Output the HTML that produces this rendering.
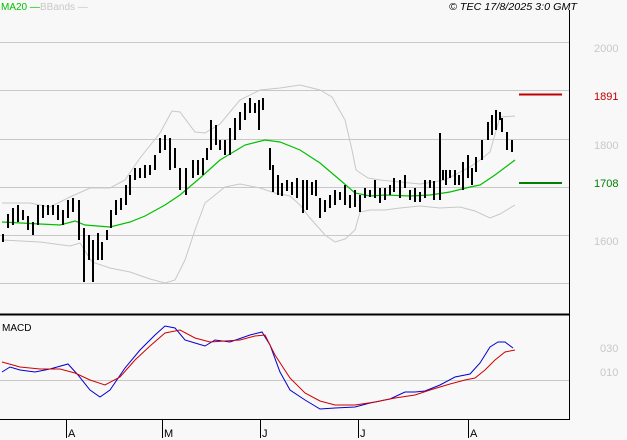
<!DOCTYPE html>
<html><head><style>
html,body{margin:0;padding:0;background:#f8f8f8;}
svg{display:block;font-family:"Liberation Sans",sans-serif;}
</style></head><body>
<svg width="627" height="440" viewBox="0 0 627 440" xmlns="http://www.w3.org/2000/svg">
<rect width="627" height="440" fill="#f8f8f8"/>
<g stroke="#c8c8c8" stroke-width="1">
<line x1="0" y1="42.5" x2="569" y2="42.5"/>
<line x1="0" y1="90.5" x2="569" y2="90.5"/>
<line x1="0" y1="139.5" x2="569" y2="139.5"/>
<line x1="0" y1="187.5" x2="569" y2="187.5"/>
<line x1="0" y1="235.5" x2="569" y2="235.5"/>
<line x1="0" y1="283.5" x2="569" y2="283.5"/>
<line x1="0" y1="380.5" x2="569" y2="380.5"/>
</g>
<line x1="569.5" y1="10" x2="569.5" y2="420" stroke="#000"/>
<line x1="0" y1="314.5" x2="569" y2="314.5" stroke="#000" stroke-width="2"/>
<line x1="0" y1="419.5" x2="570" y2="419.5" stroke="#000"/>
<g stroke="#000"><line x1="66.5" y1="420" x2="66.5" y2="438"/><line x1="162.5" y1="420" x2="162.5" y2="438"/><line x1="260.5" y1="420" x2="260.5" y2="438"/><line x1="358.5" y1="420" x2="358.5" y2="438"/><line x1="468.5" y1="420" x2="468.5" y2="438"/></g>
<g font-size="11" fill="#000"><text x="68" y="437">A</text><text x="164" y="437">M</text><text x="262" y="437">J</text><text x="360" y="437">J</text><text x="470" y="437">A</text></g>
<text x="1" y="10" font-size="10" fill="#00c000">MA20 —</text>
<text x="40" y="10" font-size="10" fill="#c8c8c8">BBands —</text>
<text x="449" y="10" font-size="10" font-style="italic" fill="#000" textLength="128" lengthAdjust="spacingAndGlyphs">© TEC 17/8/2025 3:0 GMT</text>
<g font-size="11" fill="#c8c8c8"><text x="594" y="52">2000</text><text x="594" y="149">1800</text><text x="594" y="245">1600</text><text x="600" y="352">030</text><text x="600" y="376">010</text></g>
<line x1="519" y1="94.5" x2="562" y2="94.5" stroke="#c00000" stroke-width="2"/>
<text x="594" y="100" font-size="11" fill="#c00000">1891</text>
<line x1="519" y1="183" x2="562" y2="183" stroke="#008000" stroke-width="2"/>
<text x="594" y="187" font-size="11" fill="#008000">1708</text>
<g fill="none" stroke="#c8c8c8" stroke-width="1">
<polyline points="2,203 30,203 50,207 70,197 90,188 110,188 125,180 140,158 160,133 172,111 180,112 195,132 205,133 220,124 240,100 260,90 280,88 300,85 320,90 332,97 345,120 352,150 356,170 368,178 380,180 400,182 420,184 445,180 470,167 480,160 490,152 500,117 515,116"/>
<polyline points="2,240 40,242 70,246 80,243 92,262 110,268 130,272 150,279 165,283 175,280 185,260 195,230 205,203 225,187 240,184 260,188 275,193 290,196 300,205 310,218 325,235 335,242 345,239 355,230 360,212 370,210 385,210 400,208 420,206 440,208 460,207 475,211 490,218 500,214 515,205"/>
</g>
<polyline fill="none" stroke="#00c000" stroke-width="1.2" points="2,222 40,224 60,225 75,221 85,225 110,227 130,222 145,216 165,205 180,195 200,178 220,160 245,145 265,140 280,142 300,150 320,163 340,180 355,193 370,196 385,195 410,196 430,195 450,192 470,187 480,185 495,175 515,160"/>
<path fill="none" stroke="#000" stroke-width="2" d="M3 234V242M8 214V228M13 208V225M18 205V222M23 210V220M28 216V230M33 222V235M38 205V225M43 205V218M48 205V215M53 205V215M58 205V220M63 210V225M68 200V218M73 198V212M79 200V240M84 228V282M89 235V260M93 240V282M98 233V260M102 242V260M107 230V240M111 210V228M116 200V215M121 198V210M126 185V205M130 175V195M135 168V180M140 168V178M145 165V178M150 165V175M155 155V170M160 138V153M165 135V150M170 138V170M175 148V168M180 168V190M186 168V195M193 160V178M198 160V175M203 158V175M207 148V160M211 120V150M216 125V145M220 140V150M225 140V155M230 128V155M235 118V140M240 112V130M245 103V120M250 98V113M255 103V113M259 100V130M263 98V110M270 148V170M273 165V192M278 175V195M282 183V196M287 180V191M292 182V195M297 178V198M303 180V213M307 180V210M312 182V195M316 180V196M320 198V218M325 200V212M330 195V208M335 190V205M340 192V200M345 185V205M350 195V208M355 190V207M360 195V212M365 188V198M370 190V197M375 180V198M380 188V203M385 188V200M390 185V195M394 178V192M400 180V198M405 175V188M410 190V200M415 188V202M420 192V202M425 180V198M430 180V188M434 181V200M440 133V200M443 170V180M446 170V185M450 170V178M455 170V185M459 175V185M463 162V190M468 155V178M472 168V185M476 157V172M482 140V160M488 122V140M492 115V135M496 110V130M500 112V120M502 118V132M507 132V150M512 140V152"/>
<polyline fill="none" stroke="#0000d0" stroke-width="1" points="2,372 10,367 20,370 35,372 50,369 68,364 78,375 90,390 100,397 110,390 125,368 140,350 155,335 165,326 175,328 185,340 195,343 205,346 215,340 230,342 250,335 262,332 270,345 280,372 290,390 305,400 320,409 335,408 355,407 370,403 390,399 405,392 415,392 425,391 440,385 455,377 470,374 480,363 490,347 498,342 505,342 513,348"/>
<polyline fill="none" stroke="#d00000" stroke-width="1" points="2,362 20,367 40,369 60,369 75,373 90,380 105,385 120,377 135,360 150,346 165,333 180,330 195,338 210,342 225,341 240,340 255,336 265,335 275,355 290,378 305,393 320,401 335,405 355,405 375,402 395,398 415,395 430,390 450,384 465,380 475,378 485,370 495,360 505,352 515,350"/>
<text x="2" y="331" font-size="10" fill="#000">MACD</text>
</svg>
</body></html>
